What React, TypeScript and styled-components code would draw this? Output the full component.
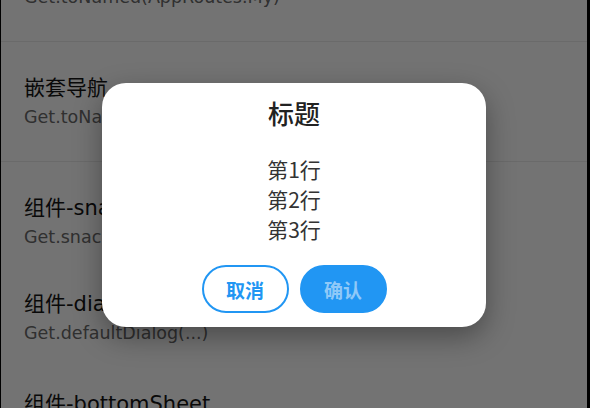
import React from "react";
import styled, { createGlobalStyle } from "styled-components";

const Global = createGlobalStyle`
  html, body { margin: 0; padding: 0; background: #000; overflow: hidden; }
  body { font-family: "DejaVu Sans", "Noto Sans CJK SC", sans-serif; }
`;

const Frame = styled.div`
  width: 590px;
  height: 408px;
  display: flex;
  background: #000;
  overflow: hidden;
`;

const Screen = styled.div`
  position: relative;
  margin-left: 1px;
  width: 586px;
  height: 408px;
  background: #fff;
  overflow: hidden;
`;

const List = styled.div`
  display: flex;
  flex-direction: column;
  margin-top: -78px;
`;

const Item = styled.div<{ $h: number; $divider?: boolean }>`
  box-sizing: border-box;
  height: ${(p) => p.$h}px;
  padding: 34px 23px 0;
  display: flex;
  flex-direction: column;
  gap: 6px;
  border-bottom: ${(p) => (p.$divider ? "1px solid #ececec" : "none")};
  flex-shrink: 0;
`;

const ItemTitle = styled.div`
  font-family: "DejaVu Sans", "Noto Sans CJK SC", sans-serif;
  font-size: 21px;
  line-height: 24px;
  color: #141414;
  white-space: nowrap;
`;

const ItemSub = styled.div`
  font-family: "DejaVu Sans", "Noto Sans CJK SC", sans-serif;
  font-size: 17.5px;
  line-height: 22px;
  color: #6a6a6a;
  white-space: nowrap;
`;

const Scrim = styled.div`
  position: absolute;
  inset: 0;
  box-sizing: border-box;
  padding-top: 2px;
  background: rgba(0, 0, 0, 0.548);
  display: flex;
  align-items: center;
  justify-content: center;
`;

const Dialog = styled.div`
  width: 384px;
  height: 244px;
  box-sizing: border-box;
  background: #fff;
  border-radius: 24px;
  box-shadow: 0 10px 28px rgba(0, 0, 0, 0.35);
  padding: 16px 0 13px;
  display: flex;
  flex-direction: column;
  align-items: center;
  font-family: "Noto Sans CJK SC", sans-serif;
`;

const DialogTitle = styled.div`
  font-size: 26px;
  line-height: 28px;
  font-weight: 500;
  color: #222;
`;

const DialogBody = styled.div`
  margin-top: 27px;
  display: flex;
  flex-direction: column;
  align-items: center;
  font-size: 21px;
  line-height: 30px;
  color: #333;
`;

const Actions = styled.div`
  margin-top: 21px;
  display: flex;
  gap: 11px;
`;

const Button = styled.button<{ $primary?: boolean }>`
  box-sizing: border-box;
  width: 87px;
  height: 48px;
  border-radius: 24px;
  border: 2.5px solid #2196f3;
  background: ${(p) => (p.$primary ? "#2196f3" : "#fff")};
  color: ${(p) => (p.$primary ? "#8fc9f8" : "#2196f3")};
  font-family: "Noto Sans CJK SC", sans-serif;
  font-size: 19px;
  font-weight: 700;
  padding: 0;
  cursor: pointer;
`;

const items = [
  { title: "命名导航", sub: "Get.toNamed(AppRoutes.My)", h: 120, divider: true },
  { title: "嵌套导航", sub: "Get.toNamed(AppRoutes.Nested)", h: 120, divider: true },
  { title: "组件-snackbar", sub: "Get.snackbar(...)", h: 96 },
  { title: "组件-dialog", sub: "Get.defaultDialog(...)", h: 100 },
  { title: "组件-bottomSheet", sub: "Get.bottomSheet(...)", h: 120 },
];

export default function App() {
  return (
    <Frame>
      <Global />
      <Screen>
        <List>
          {items.map((it) => (
            <Item key={it.title} $h={it.h} $divider={it.divider}>
              <ItemTitle>{it.title}</ItemTitle>
              <ItemSub>{it.sub}</ItemSub>
            </Item>
          ))}
        </List>
        <Scrim>
          <Dialog>
            <DialogTitle>标题</DialogTitle>
            <DialogBody>
              <div>第1行</div>
              <div>第2行</div>
              <div>第3行</div>
            </DialogBody>
            <Actions>
              <Button>取消</Button>
              <Button $primary>确认</Button>
            </Actions>
          </Dialog>
        </Scrim>
      </Screen>
    </Frame>
  );
}
